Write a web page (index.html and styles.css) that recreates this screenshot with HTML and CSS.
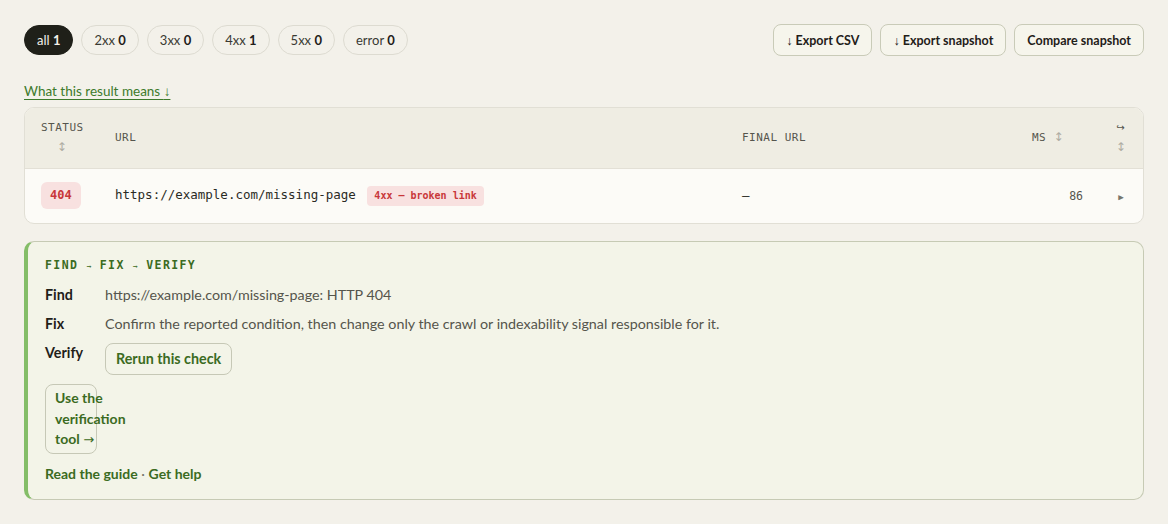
FILE: index.html
```html
<!DOCTYPE HTML>
<html>
	<head>
		<title>Crawl results</title>
		<meta charset="utf-8">
		<link rel="stylesheet" href="styles.css">
	</head>

	<body>
		<div class="toolbar">
			<div class="chips">
				<span class="chip active">all <b>1</b></span>
				<span class="chip">2xx <b>0</b></span>
				<span class="chip">3xx <b>0</b></span>
				<span class="chip">4xx <b>1</b></span>
				<span class="chip">5xx <b>0</b></span>
				<span class="chip">error <b>0</b></span>
			</div>
			<div class="actions">
				<button class="btn"><span class="arrow">↓</span> Export CSV</button>
				<button class="btn"><span class="arrow">↓</span> Export snapshot</button>
				<button class="btn">Compare snapshot</button>
			</div>
		</div>

		<a href="#meaning" class="meaning_link">What this result means <span class="arrow">↓</span></a>

		<div class="results">
			<table>
				<colgroup>
					<col class="col_status">
					<col class="col_url">
					<col class="col_final">
					<col class="col_ms">
					<col class="col_more">
				</colgroup>
				<thead>
					<tr>
						<th class="status">STATUS <span class="sort">↕</span></th>
						<th>URL</th>
						<th>FINAL URL</th>
						<th>MS <span class="sort">↕</span></th>
						<th class="more"><span class="redirect">↪</span> <span class="sort">↕</span></th>
					</tr>
				</thead>
				<tbody>
					<tr>
						<td><span class="code">404</span></td>
						<td class="url">https://example.com/missing-page <span class="tag">4xx — broken link</span></td>
						<td class="url">—</td>
						<td class="ms">86</td>
						<td class="more"><span class="expand">▶</span></td>
					</tr>
				</tbody>
			</table>
		</div>

		<div class="verify" id="meaning">
			<div class="verify_title">FIND <span class="small_arrow">→</span> FIX <span class="small_arrow">→</span> VERIFY</div>
			<div class="steps">
				<span class="label">Find</span>
				<span class="value">https://example.com/missing-page: HTTP 404</span>
				<span class="label">Fix</span>
				<span class="value">Confirm the reported condition, then change only the crawl or indexability signal responsible for it.</span>
				<span class="label">Verify</span>
				<span><a href="#" class="rerun">Rerun this check</a></span>
			</div>
			<div>
				<a href="#" class="tool_link"><span>Use the</span> <span>verification</span> <span>tool <i class="long_arrow">→</i></span></a>
			</div>
			<div class="help_links">
				<a href="#">Read the guide</a> <span class="dot">·</span> <a href="#">Get help</a>
			</div>
		</div>
	</body>
</html>
```

FILE: styles.css
```css
html, body {
	margin: 0px;
	padding: 0px;
}

body {
	background-color: #f3f1ea;
	color: #1f2019;
	font-family: "Lato", "Liberation Sans", sans-serif;
	font-size: 13px;
	padding: 24px 24px;
}

.arrow {
	font-family: "Liberation Sans", sans-serif;
	font-style: normal;
	font-weight: normal;
}

.long_arrow {
	font-family: "DejaVu Sans", sans-serif;
	font-style: normal;
	font-weight: normal;
	font-size: 13px;
	line-height: 1;
}

.toolbar {
	display: flex;
	justify-content: space-between;
	align-items: center;
}

.chips, .actions {
	display: flex;
	gap: 8px;
}

.chip {
	display: inline-block;
	height: 28px;
	line-height: 28px;
	padding: 0 12px;
	border: 1px solid #dddbd1;
	border-radius: 15px;
	color: #3a3a33;
	font-size: 13px;
}

.chip b {
	font-weight: 700;
	color: #1f2019;
}

.chip.active {
	background-color: #1f2019;
	border-color: #1f2019;
	color: #f3f1ea;
}

.chip.active b {
	color: #f3f1ea;
}

.btn {
	height: 32px;
	padding: 0 12px;
	background-color: #f6f5ec;
	border: 1px solid #c9cbb8;
	border-radius: 8px;
	color: #1f2019;
	font-family: inherit;
	font-size: 12.5px;
	font-weight: 700;
}

.meaning_link {
	display: inline-block;
	margin-top: 26px;
	color: #3d7a2b;
	font-size: 13.5px;
	line-height: 18px;
	text-decoration: underline;
	text-underline-offset: 3px;
}

.results {
	margin-top: 6px;
	border: 1px solid #e1dfd5;
	border-radius: 10px;
	overflow: hidden;
	background-color: #fcfbf7;
}

table {
	width: 100%;
	border-collapse: collapse;
	table-layout: fixed;
}

.col_status { width: 74px; }
.col_final { width: 290px; }
.col_ms { width: 83px; }
.col_more { width: 44px; }

th {
	background-color: #efede3;
	border-bottom: 1px solid #e3e0d6;
	padding: 10px 16px 10px 16px;
	text-align: left;
	font-family: "DejaVu Sans Mono", monospace;
	font-size: 11px;
	font-weight: normal;
	letter-spacing: 0.5px;
	line-height: 20px;
	color: #55554d;
}

th.status {
	text-align: center;
}

th.more, td.more {
	text-align: center;
}

.sort {
	font-family: "DejaVu Sans", sans-serif;
	font-size: 12px;
	line-height: 1;
	color: #aeaca2;
}

.redirect {
	font-family: "DejaVu Sans", sans-serif;
	font-size: 10px;
	line-height: 1;
	color: #55554d;
}

td {
	padding: 13px 16px 14px 16px;
	font-family: "DejaVu Sans Mono", monospace;
	font-size: 12.5px;
	color: #2a2a24;
	vertical-align: middle;
}

.code {
	display: inline-block;
	padding: 0 9px;
	line-height: 27px;
	border-radius: 6px;
	background-color: #f8e1e0;
	color: #c8373a;
	font-size: 12px;
	font-weight: bold;
}

.tag {
	display: inline-block;
	margin-left: 4px;
	padding: 0 7px;
	line-height: 20px;
	border-radius: 4px;
	background-color: #f8e1e0;
	color: #c8373a;
	font-size: 10px;
	font-weight: bold;
}

td.ms {
	text-align: right;
	color: #55554d;
	font-size: 11.5px;
}

.expand {
	color: #77766c;
	font-size: 9px;
}

.verify {
	margin-top: 17px;
	padding: 15px 20px 15px 17px;
	background-color: #f3f4e8;
	border: 1px solid #c6cab4;
	border-left: 4px solid #84bd68;
	border-radius: 10px;
	display: flex;
	flex-direction: column;
	gap: 9px;
}

.verify_title {
	font-family: "DejaVu Sans Mono", monospace;
	font-size: 11.5px;
	font-weight: bold;
	letter-spacing: 1.4px;
	line-height: 16px;
	color: #3b6b22;
	margin-bottom: 1px;
}

.small_arrow {
	font-size: 8px;
	font-weight: normal;
	letter-spacing: 0;
}

.steps {
	display: grid;
	grid-template-columns: 60px 1fr;
	row-gap: 9px;
	align-items: start;
	font-size: 14.3px;
	line-height: 20px;
}

.label {
	font-weight: 700;
	color: #1f2019;
}

.value {
	color: #55554c;
}

.rerun {
	display: inline-block;
	padding: 0 10px;
	line-height: 30px;
	border: 1px solid #c6c8b6;
	border-radius: 8px;
	color: #3b6b22;
	font-weight: 700;
	text-decoration: none;
}

.tool_link {
	display: inline-block;
	box-sizing: border-box;
	width: 52px;
	padding: 3px 9px;
	border: 1px solid #c6c8b6;
	border-radius: 8px;
	color: #3b6b22;
	font-size: 14px;
	font-weight: 700;
	line-height: 20.5px;
	text-decoration: none;
}

.tool_link span {
	display: block;
	white-space: nowrap;
}

.help_links {
	margin-top: 1px;
	font-size: 14px;
	line-height: 20px;
}

.help_links a {
	color: #3b6b22;
	font-weight: 700;
	text-decoration: none;
}

.dot {
	color: #77766c;
}
```
